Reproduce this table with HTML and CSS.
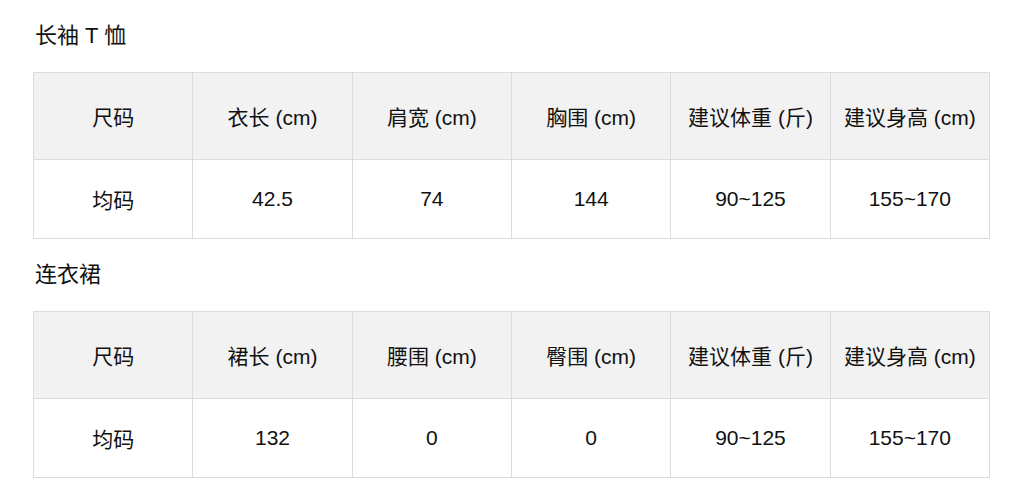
FILE: index.html
```html
<!DOCTYPE html>
<html lang="zh-CN">
<head>
<meta charset="utf-8">
<link rel="stylesheet" href="styles.css">
</head>
<body>
<div class="page">
  <h2 class="title">长袖 T 恤</h2>
  <table class="size-table">
    <thead>
      <tr><th>尺码</th><th>衣长 (cm)</th><th>肩宽 (cm)</th><th>胸围 (cm)</th><th>建议体重 (斤)</th><th>建议身高 (cm)</th></tr>
    </thead>
    <tbody>
      <tr><td>均码</td><td>42.5</td><td>74</td><td>144</td><td>90~125</td><td>155~170</td></tr>
    </tbody>
  </table>
  <h2 class="title">连衣裙</h2>
  <table class="size-table">
    <thead>
      <tr><th>尺码</th><th>裙长 (cm)</th><th>腰围 (cm)</th><th>臀围 (cm)</th><th>建议体重 (斤)</th><th>建议身高 (cm)</th></tr>
    </thead>
    <tbody>
      <tr><td>均码</td><td>132</td><td>0</td><td>0</td><td>90~125</td><td>155~170</td></tr>
    </tbody>
  </table>
</div>
</body>
</html>
```

FILE: styles.css
```css
html, body {
  margin: 0;
  padding: 0;
  background: #ffffff;
}
body {
  font-family: "Liberation Sans", "Noto Sans CJK SC", sans-serif;
  color: #1a1a1a;
}
.page {
  padding: 0 35px 0 33px;
}
.title {
  margin: 0;
  padding: 22px 0 22px 2px;
  font-size: 22px;
  line-height: 28px;
  font-weight: 400;
  color: #111;
}
.size-table {
  width: 957px;
  border-collapse: collapse;
  table-layout: fixed;
}
.size-table th,
.size-table td {
  border: 1px solid #dcdcdc;
  text-align: center;
  font-size: 21px;
  font-weight: 400;
  padding: 0;
  white-space: nowrap;
  color: #111;
}
.size-table th {
  background: #f2f2f2;
  height: 86px;
}
.size-table td {
  height: 78px;
}
```
